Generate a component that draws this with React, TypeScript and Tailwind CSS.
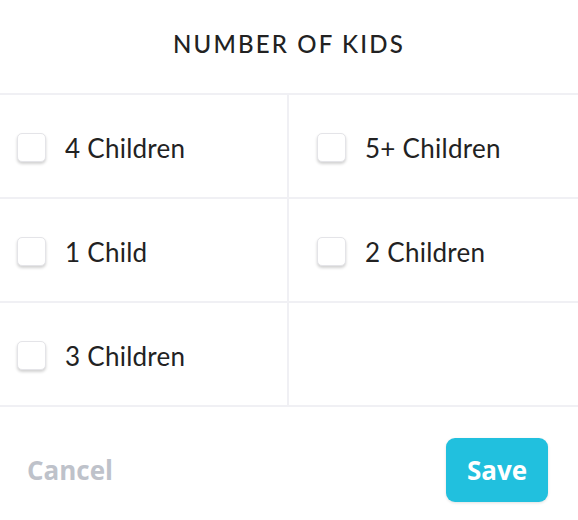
import { useState } from 'react'

const options = ['4 Children', '5+ Children', '1 Child', '2 Children', '3 Children']

function Box({ label, checked, onToggle, right }: { label: string; checked: boolean; onToggle: () => void; right?: boolean }) {
  return (
    <label
      className={`flex h-[104px] cursor-pointer items-center border-b-2 border-[#f0f0f4] ${
        right ? 'pl-[28px]' : 'border-r-2 pl-[17px]'
      }`}
    >
      <span
        onClick={onToggle}
        className={`mt-[3px] flex h-[29px] w-[29px] items-center justify-center rounded-[5px] border border-[#e4e4e8] shadow-[0_2px_3px_rgba(0,0,0,0.18)] ${
          checked ? 'bg-[#21c0de]' : 'bg-white'
        }`}
      >
        {checked && (
          <svg width="16" height="16" viewBox="0 0 24 24" fill="none" stroke="white" strokeWidth="3">
            <path d="M5 12l5 5L20 7" />
          </svg>
        )}
      </span>
      <span className="ml-[19px] mt-[4px] text-[26px] leading-none tracking-[0.01em] text-[#222]">{label}</span>
    </label>
  )
}

export default function App() {
  const [selected, setSelected] = useState<string[]>([])

  const toggle = (o: string) =>
    setSelected(s => (s.includes(o) ? s.filter(x => x !== o) : [...s, o]))

  return (
    <div className="h-[520px] w-[578px] bg-white" style={{ fontFamily: 'Lato, sans-serif' }}>
      <div className="flex h-[95px] items-center justify-center border-b-2 border-[#f0f0f4]">
        <h1 className="mb-[5px] text-[24px] font-medium tracking-[0.09em] text-[#222]">NUMBER OF KIDS</h1>
      </div>
      <div className="grid grid-cols-2">
        {options.map((o, i) => (
          <Box key={o} label={o} right={i % 2 === 1} checked={selected.includes(o)} onToggle={() => toggle(o)} />
        ))}
        <div className="h-[104px] border-b-2 border-[#f0f0f4]" />
      </div>
      <div
        className="flex items-center justify-between pl-[27px] pr-[30px] pt-[31px]"
        style={{ fontFamily: '"Open Sans", sans-serif' }}
      >
        <button className="text-[26px] font-bold text-[#bec2ca]">Cancel</button>
        <button className="h-[64px] w-[102px] rounded-[9px] bg-[#21c0de] text-[26px] font-bold text-white shadow-[0_1px_3px_rgba(0,0,0,0.12)]">
          Save
        </button>
      </div>
    </div>
  )
}
